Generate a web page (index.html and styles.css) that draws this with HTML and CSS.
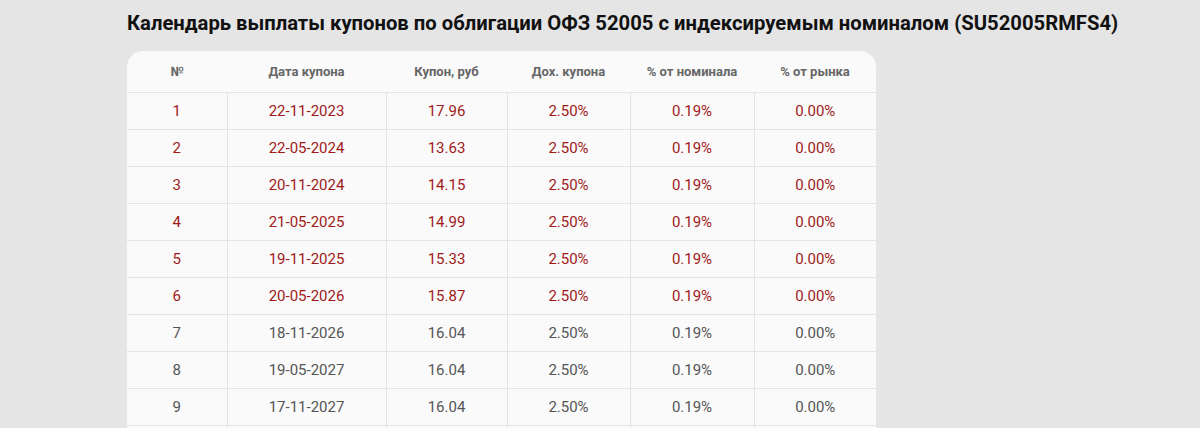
FILE: index.html
```html
<!DOCTYPE html>
<html lang="ru">
<head>
<meta charset="utf-8">
<title>Календарь выплаты купонов</title>
<link rel="stylesheet" href="styles.css">
</head>
<body>
<main class="page">
  <h1 class="title">Календарь выплаты купонов по облигации ОФЗ 52005 с индексируемым номиналом (SU52005RMFS4)</h1>
  <div class="card">
    <table class="coupons">
      <colgroup>
        <col class="c-num"><col class="c-date"><col class="c-coupon"><col class="c-yield"><col class="c-nom"><col class="c-mkt">
      </colgroup>
      <thead>
        <tr><th>№</th><th>Дата купона</th><th>Купон, руб</th><th>Дох. купона</th><th>% от номинала</th><th>% от рынка</th></tr>
      </thead>
      <tbody>
        <tr class="paid"><td>1</td><td>22-11-2023</td><td>17.96</td><td>2.50%</td><td>0.19%</td><td>0.00%</td></tr>
        <tr class="paid"><td>2</td><td>22-05-2024</td><td>13.63</td><td>2.50%</td><td>0.19%</td><td>0.00%</td></tr>
        <tr class="paid"><td>3</td><td>20-11-2024</td><td>14.15</td><td>2.50%</td><td>0.19%</td><td>0.00%</td></tr>
        <tr class="paid"><td>4</td><td>21-05-2025</td><td>14.99</td><td>2.50%</td><td>0.19%</td><td>0.00%</td></tr>
        <tr class="paid"><td>5</td><td>19-11-2025</td><td>15.33</td><td>2.50%</td><td>0.19%</td><td>0.00%</td></tr>
        <tr class="paid"><td>6</td><td>20-05-2026</td><td>15.87</td><td>2.50%</td><td>0.19%</td><td>0.00%</td></tr>
        <tr><td>7</td><td>18-11-2026</td><td>16.04</td><td>2.50%</td><td>0.19%</td><td>0.00%</td></tr>
        <tr><td>8</td><td>19-05-2027</td><td>16.04</td><td>2.50%</td><td>0.19%</td><td>0.00%</td></tr>
        <tr><td>9</td><td>17-11-2027</td><td>16.04</td><td>2.50%</td><td>0.19%</td><td>0.00%</td></tr>
      </tbody>
    </table>
    <div class="next-row"></div>
  </div>
</main>
</body>
</html>
```

FILE: styles.css
```css
html, body {
  margin: 0;
  padding: 0;
  background: #e5e5e5;
  font-family: Roboto, "Liberation Sans", Arial, sans-serif;
}

.page {
  padding: 11px 0 0 127px;
}

.title {
  margin: 0 0 16px;
  font-size: 20.25px;
  line-height: 24px;
  font-weight: 700;
  color: #111;
  white-space: nowrap;
}

.card {
  width: 749px;
  background: #fafafa;
  border-radius: 16px 16px 0 0;
  overflow: hidden;
}

.coupons {
  width: 749px;
  border-collapse: collapse;
  table-layout: fixed;
}

.c-num { width: 100px; }
.c-date { width: 159px; }
.c-coupon { width: 121px; }
.c-yield { width: 123px; }
.c-nom { width: 124px; }
.c-mkt { width: 122px; }

.coupons th {
  height: 41px;
  padding: 0;
  font-size: 13px;
  font-weight: 700;
  color: #666;
  text-align: center;
  border-bottom: 1px solid #e4e4e4;
}

.coupons td {
  height: 36px;
  padding: 0;
  font-size: 15px;
  color: #555;
  text-align: center;
  border-bottom: 1px solid #e4e4e4;
  border-left: 1px solid #e4e4e4;
}

.coupons td:first-child {
  border-left: none;
}

.coupons tr.paid td {
  color: #a01a1a;
}

.next-row {
  height: 10px;
  background: linear-gradient(to right,
    transparent 0 100px, #e4e4e4 100px 101px,
    transparent 101px 259px, #e4e4e4 259px 260px,
    transparent 260px 380px, #e4e4e4 380px 381px,
    transparent 381px 503px, #e4e4e4 503px 504px,
    transparent 504px 627px, #e4e4e4 627px 628px,
    transparent 628px);
}
```
